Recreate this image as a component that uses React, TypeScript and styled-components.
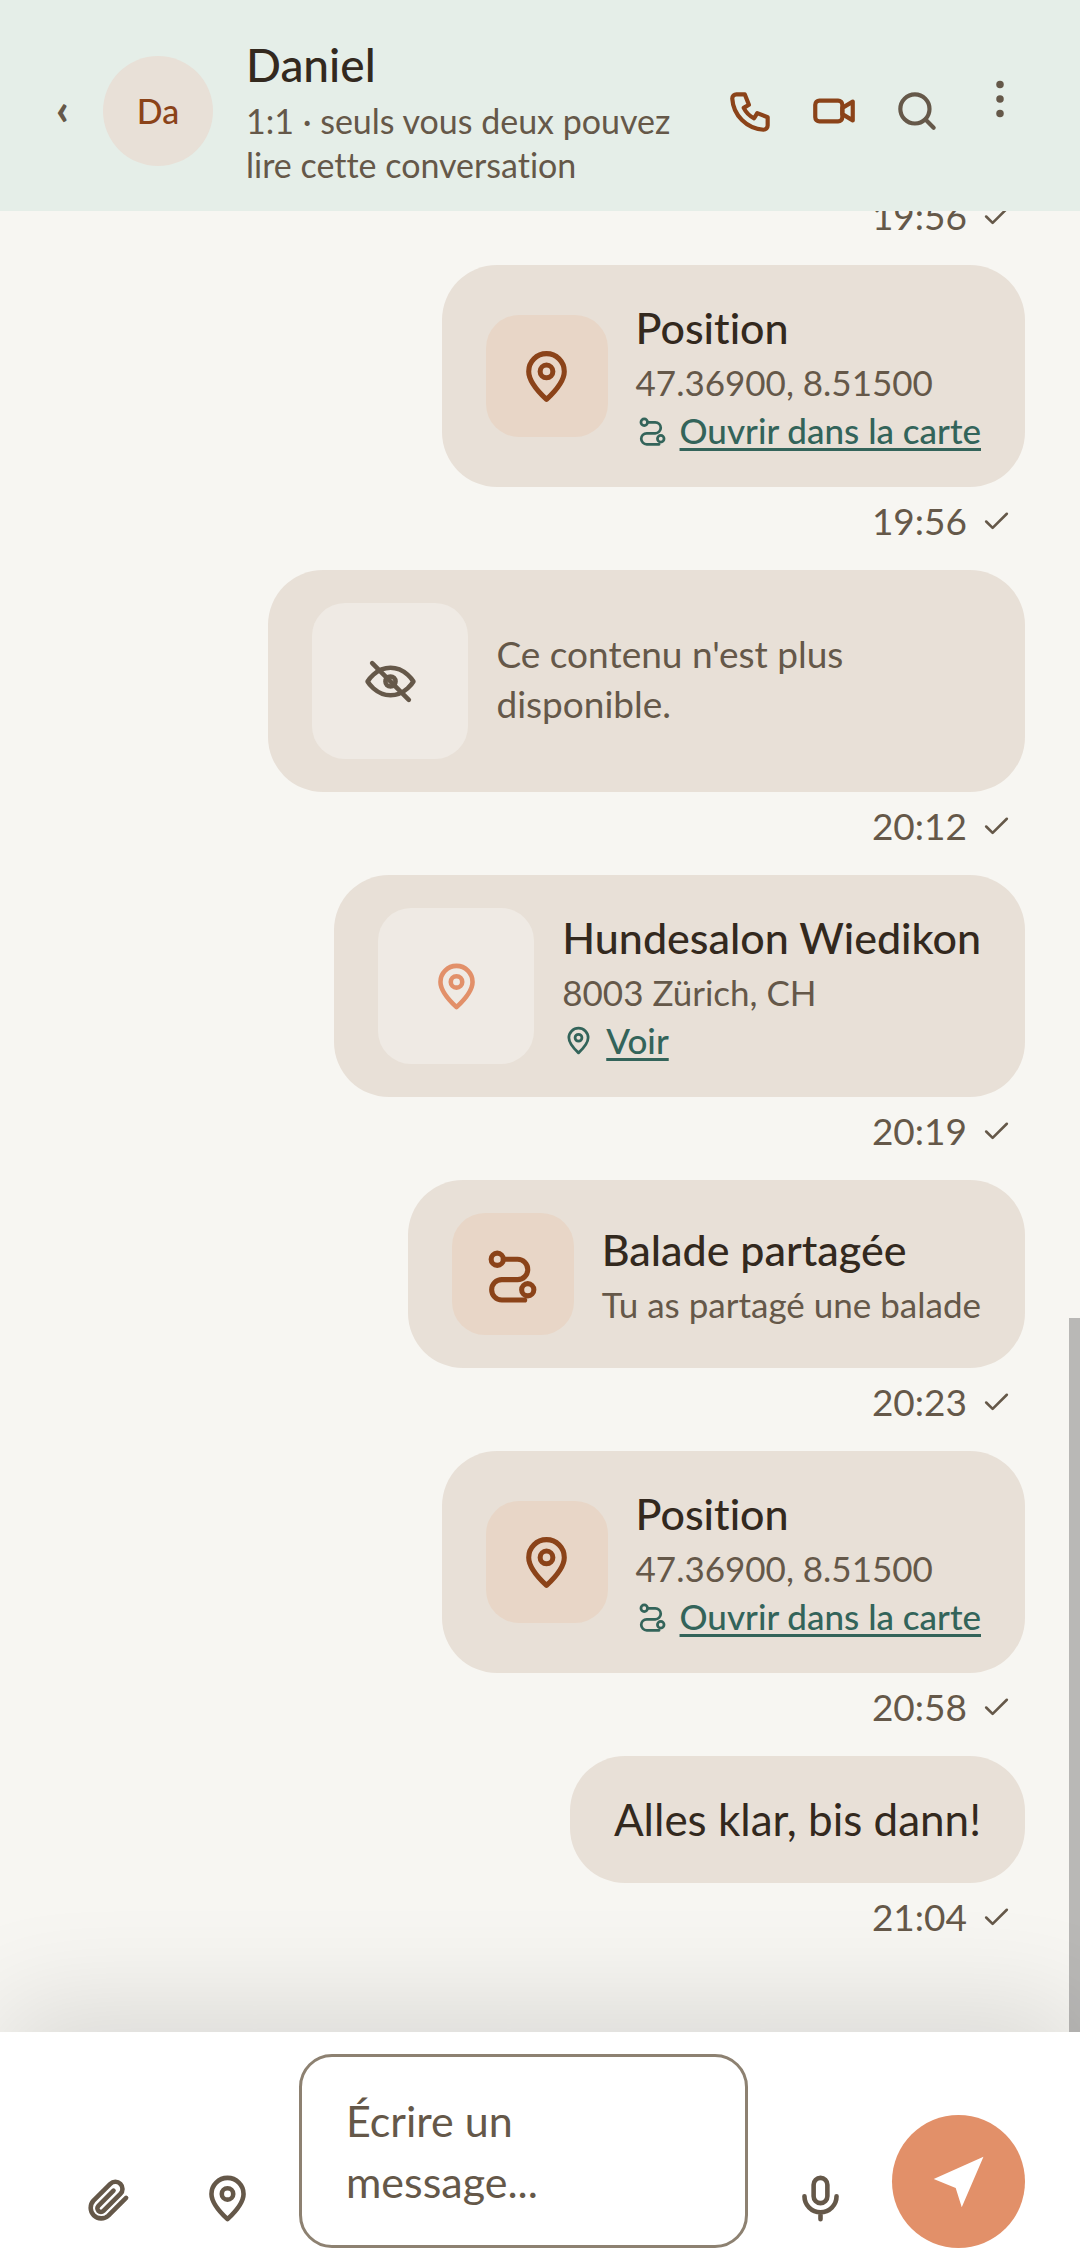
import React from "react";
import styled, { createGlobalStyle } from "styled-components";

const color = {
  page: "#f7f6f2",
  header: "#e5eee8",
  bubble: "#e8e0d7",
  tileWarm: "#e8d6c7",
  tileLight: "#efeae4",
  ink: "#33291e",
  muted: "#655849",
  rust: "#8b4319",
  coral: "#e29069",
  teal: "#33645a",
  border: "#8d8171",
  white: "#ffffff",
};

const GlobalStyle = createGlobalStyle`
  * { box-sizing: border-box; }
  body {
    margin: 0;
    background: ${color.page};
    color: ${color.ink};
    font-family: Lato, "Open Sans", sans-serif;
    font-variant-ligatures: none;
  }
  button { font: inherit; }
`;

const Screen = styled.div`
  display: flex;
  flex-direction: column;
  height: 100vh;
  overflow: hidden;
`;

const Header = styled.header`
  display: flex;
  align-items: center;
  flex-shrink: 0;
  padding: 34px 39px 24px 22px;
  background: ${color.header};
`;

const IconButton = styled.button<{ $size: number; $height?: number; $tone?: string }>`
  display: flex;
  align-items: center;
  justify-content: center;
  flex-shrink: 0;
  width: ${(p) => p.$size}px;
  height: ${(p) => p.$height ?? p.$size}px;
  padding: 0;
  border: 0;
  background: none;
  color: ${(p) => p.$tone ?? color.muted};
  cursor: pointer;
`;

const BackGlyph = styled.span`
  padding-bottom: 6px;
  font-size: 44px;
  font-weight: 900;
  line-height: 44px;
`;

const Avatar = styled.div`
  display: flex;
  align-items: center;
  justify-content: center;
  flex-shrink: 0;
  width: 110px;
  height: 110px;
  border-radius: 50%;
  background: ${color.bubble};
  color: ${color.rust};
  font-size: 34px;
  font-weight: 500;
`;

const Peer = styled.div`
  flex: 1;
  min-width: 0;
  margin-left: 33px;
`;

const PeerName = styled.h1`
  margin: 0 0 4px;
  font-size: 46px;
  font-weight: 500;
  line-height: 61px;
`;

const PeerNote = styled.p`
  margin: 0;
  color: ${color.muted};
  font-size: 34px;
  line-height: 44px;
`;

const Actions = styled.div`
  display: flex;
  align-items: flex-start;
`;

const Thread = styled.main`
  position: relative;
  display: flex;
  flex: 1;
  flex-direction: column;
  justify-content: flex-end;
  gap: 24px;
  min-height: 0;
  padding: 0 55px 90px;
  overflow: hidden;
`;

const ScrollThumb = styled.div`
  position: absolute;
  right: 0;
  bottom: 0;
  width: 11px;
  height: 714px;
  background: #b9b8b6;
`;

const Message = styled.article`
  display: flex;
  flex-direction: column;
  flex-shrink: 0;
  align-items: flex-end;
`;

const Bubble = styled.div`
  display: flex;
  align-items: center;
  gap: 28px;
  max-width: 78%;
  margin-bottom: 9px;
  padding: 33px 44px;
  border-radius: 55px;
  background: ${color.bubble};
`;

const Tile = styled.div<{ $large?: boolean }>`
  display: flex;
  align-items: center;
  justify-content: center;
  flex-shrink: 0;
  width: ${(p) => (p.$large ? 156 : 122)}px;
  height: ${(p) => (p.$large ? 156 : 122)}px;
  border-radius: 33px;
  background: ${(p) => (p.$large ? color.tileLight : color.tileWarm)};
`;

const CardBody = styled.div`
  min-width: 0;
`;

const CardTitle = styled.h2`
  margin: 0;
  font-size: 43px;
  font-weight: 500;
  line-height: 60px;
`;

const CardText = styled.p`
  margin: 0;
  color: ${color.muted};
  font-size: 35px;
  line-height: 48px;
`;

const Notice = styled.p`
  margin: 0;
  padding-bottom: 4px;
  color: ${color.muted};
  font-size: 37px;
  line-height: 50px;
`;

const CardLink = styled.div`
  display: flex;
  align-items: center;
  gap: 11px;
  color: ${color.teal};
  font-size: 35px;
  font-weight: 500;
  line-height: 48px;

  a {
    color: inherit;
    text-decoration: underline;
    text-decoration-thickness: 3px;
    text-underline-offset: 4px;
  }
`;

const Words = styled.p`
  margin: 0;
  font-size: 44px;
  line-height: 61px;
`;

const Meta = styled.footer`
  display: flex;
  align-items: center;
  gap: 14px;
  padding-right: 13px;
  color: ${color.muted};
  font-size: 37px;
  line-height: 50px;
`;

const Composer = styled.form`
  position: relative;
  display: flex;
  align-items: flex-end;
  flex-shrink: 0;
  gap: 22px;
  padding: 22px 55px 20px;
  background: ${color.white};
  box-shadow: 0 -24px 110px rgba(0, 0, 0, 0.12);
`;

const Field = styled.textarea`
  flex: 1;
  min-width: 0;
  height: 194px;
  padding: 33px 44px;
  border: 3px solid ${color.border};
  border-radius: 33px;
  background: ${color.white};
  color: ${color.ink};
  font: 400 43px / 61px Lato, "Open Sans", sans-serif;
  resize: none;
  overflow: hidden;

  &::placeholder {
    color: ${color.muted};
    opacity: 1;
  }
`;

const SendButton = styled(IconButton)`
  border-radius: 50%;
  background: ${color.coral};
`;

type IconProps = { size: number; tone?: string; children: React.ReactNode };

function Icon({ size, tone = "currentColor", children }: IconProps) {
  return (
    <svg
      width={size}
      height={size}
      viewBox="0 0 24 24"
      fill="none"
      stroke={tone}
      strokeWidth={2}
      strokeLinecap="round"
      strokeLinejoin="round"
      aria-hidden="true"
    >
      {children}
    </svg>
  );
}

const pinShape = (
  <>
    <path d="M12 21c-4.500-4.200-7-7.700-7-11a7 7 0 0 1 14 0c0 3.300-2.500 6.800-7 11z" />
    <circle cx="12" cy="10" r="2.5" />
  </>
);

const routeShape = (
  <>
    <circle cx="6" cy="6" r="2.4" />
    <circle cx="18" cy="18" r="2.4" />
    <path d="M8.400 6H14a4 4 0 0 1 0 8H7.800a4 4 0 0 0 0 8h9" />
  </>
);

type Entry = {
  id: string;
  time: string;
  kind: "sent" | "position" | "gone" | "place" | "walk" | "text";
};

const entries: Entry[] = [
  { id: "m1", time: "19:56", kind: "sent" },
  { id: "m2", time: "19:56", kind: "position" },
  { id: "m3", time: "20:12", kind: "gone" },
  { id: "m4", time: "20:19", kind: "place" },
  { id: "m5", time: "20:23", kind: "walk" },
  { id: "m6", time: "20:58", kind: "position" },
  { id: "m7", time: "21:04", kind: "text" },
];

function Content({ kind }: { kind: Entry["kind"] }) {
  switch (kind) {
    case "position":
      return (
        <Bubble>
          <Tile>
            <Icon size={61} tone={color.rust}>{pinShape}</Icon>
          </Tile>
          <CardBody>
            <CardTitle>Position</CardTitle>
            <CardText>47.36900, 8.51500</CardText>
            <CardLink>
              <Icon size={33}>{routeShape}</Icon>
              <a href="#carte">Ouvrir dans la carte</a>
            </CardLink>
          </CardBody>
        </Bubble>
      );
    case "gone":
      return (
        <Bubble>
          <Tile $large>
            <Icon size={55} tone={color.muted}>
              <path d="M2 12s3.500-6 10-6 10 6 10 6-3.500 6-10 6-10-6-10-6z" />
              <circle cx="12" cy="12" r="2.2" />
              <path d="M4 4l16 16" />
            </Icon>
          </Tile>
          <CardBody>
            <Notice>Ce contenu n'est plus disponible.</Notice>
          </CardBody>
        </Bubble>
      );
    case "place":
      return (
        <Bubble>
          <Tile $large>
            <Icon size={55} tone={color.coral}>{pinShape}</Icon>
          </Tile>
          <CardBody>
            <CardTitle>Hundesalon Wiedikon</CardTitle>
            <CardText>8003 Zürich, CH</CardText>
            <CardLink>
              <Icon size={33}>{pinShape}</Icon>
              <a href="#lieu">Voir</a>
            </CardLink>
          </CardBody>
        </Bubble>
      );
    case "walk":
      return (
        <Bubble>
          <Tile>
            <Icon size={61} tone={color.rust}>{routeShape}</Icon>
          </Tile>
          <CardBody>
            <CardTitle>Balade partagée</CardTitle>
            <CardText>Tu as partagé une balade</CardText>
          </CardBody>
        </Bubble>
      );
    case "text":
      return (
        <Bubble>
          <Words>Alles klar, bis dann!</Words>
        </Bubble>
      );
    default:
      return null;
  }
}

export default function App() {
  return (
    <>
      <GlobalStyle />
      <Screen>
        <Header>
          <IconButton $size={81} aria-label="Retour">
            <BackGlyph>‹</BackGlyph>
          </IconButton>
          <Avatar>Da</Avatar>
          <Peer>
            <PeerName>Daniel</PeerName>
            <PeerNote>1:1 · seuls vous deux pouvez lire cette conversation</PeerNote>
          </Peer>
          <Actions>
            <IconButton $size={83} $tone={color.rust} aria-label="Appeler">
              <Icon size={50}>
                <path d="M5 4h4l2 5-2.500 1.500a11 11 0 0 0 5 5L15 13l5 2v4a2 2 0 0 1-2 2A16 16 0 0 1 3 6a2 2 0 0 1 2-2" />
              </Icon>
            </IconButton>
            <IconButton $size={83} $tone={color.rust} aria-label="Appel vidéo">
              <Icon size={50}>
                <rect x="3" y="7" width="13" height="10" rx="2" />
                <path d="M16 10.500l5-3v9l-5-3z" />
              </Icon>
            </IconButton>
            <IconButton $size={83} aria-label="Rechercher">
              <Icon size={50}>
                <circle cx="11" cy="11" r="7" />
                <path d="M16.200 16.200L20 20" />
              </Icon>
            </IconButton>
            <IconButton $size={83} $height={60} aria-label="Menu">
              <Icon size={50} tone="none">
                <g fill={color.muted}>
                  <circle cx="12" cy="5" r="1.8" />
                  <circle cx="12" cy="12" r="1.8" />
                  <circle cx="12" cy="19" r="1.8" />
                </g>
              </Icon>
            </IconButton>
          </Actions>
        </Header>

        <Thread>
          {entries.map((entry) => (
            <Message key={entry.id}>
              <Content kind={entry.kind} />
              <Meta>
                <time>{entry.time}</time>
                <Icon size={31}>
                  <path d="M20 6L9 17l-5-5" />
                </Icon>
              </Meta>
            </Message>
          ))}
          <ScrollThumb />
        </Thread>

        <Composer onSubmit={(event) => event.preventDefault()}>
          <IconButton type="button" $size={100} aria-label="Joindre un fichier">
            <Icon size={55}>
              <path d="M21 11.700l-7.750 7.750a4.600 4.600 0 0 1-6.500-6.500l7.350-7.350a3.100 3.100 0 0 1 4.400 4.400l-7.400 7.400a1.550 1.550 0 0 1-2.200-2.200l6.600-6.600" />
            </Icon>
          </IconButton>
          <IconButton type="button" $size={100} aria-label="Partager la position">
            <Icon size={55}>{pinShape}</Icon>
          </IconButton>
          <Field aria-label="Message" placeholder="Écrire un message..." />
          <IconButton type="button" $size={100} aria-label="Message vocal">
            <Icon size={55}>
              <rect x="9" y="3" width="6" height="11" rx="3" />
              <path d="M5 11a7 7 0 0 0 14 0M12 18v3" />
            </Icon>
          </IconButton>
          <SendButton type="submit" $size={133} aria-label="Envoyer">
            <Icon size={66} tone="none">
              <path fill={color.white} d="M20.900 2.800L2.800 10.900l8 3.300L13 21.200z" />
            </Icon>
          </SendButton>
        </Composer>
      </Screen>
    </>
  );
}
